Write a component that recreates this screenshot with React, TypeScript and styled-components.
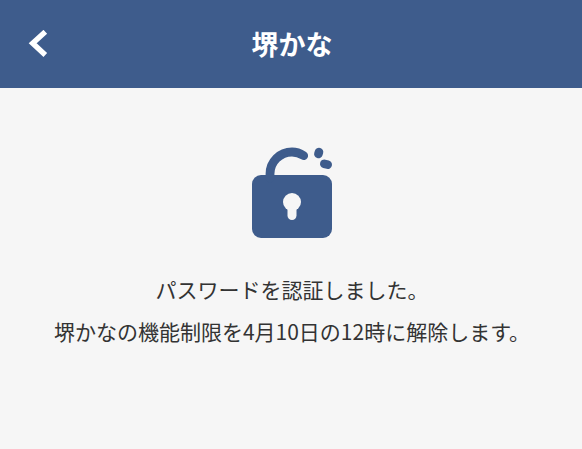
import React from "react";
import styled, { createGlobalStyle } from "styled-components";

const GlobalStyle = createGlobalStyle`
  body { margin: 0; background: #f6f6f6; }
  * { box-sizing: border-box; }
`;

const Screen = styled.div`
  height: 449px;
  display: flex;
  flex-direction: column;
  background: #f6f6f6;
  color: #333;
  font-family: "Noto Sans CJK JP", sans-serif;
`;

const Header = styled.header`
  height: 88px;
  flex: none;
  display: grid;
  grid-template-columns: 76px 1fr 76px;
  align-items: center;
  background: #3e5c8c;
  color: #fff;
`;

const BackButton = styled.button`
  display: flex;
  padding: 0 0 0 28px;
  border: 0;
  background: none;
  color: inherit;
`;

const Title = styled.h1`
  margin: 0;
  padding-left: 2px;
  text-align: center;
  font-size: 27px;
  line-height: 40px;
  font-weight: 700;
`;

const Content = styled.main`
  flex: 1;
  display: flex;
  flex-direction: column;
  align-items: center;
  padding: 56px 0 0 2px;
`;

const Message = styled.p`
  margin: 26px 0 0;
  text-align: center;
  font-size: 21px;
  line-height: 42px;
  white-space: nowrap;
`;

const BackIcon = () => (
  <svg width="20" height="28" viewBox="0 0 20 28" fill="none" stroke="currentColor" strokeWidth="5.400">
    <path d="M17.300 1.800 4.700 13.300 17.300 24.900" />
  </svg>
);

const UnlockIcon = () => (
  <svg width="88" height="98" viewBox="248 144 88 98" fill="none">
    <rect x="252" y="175" width="80" height="63" rx="9" fill="#3e5c8c" />
    <path d="M270 178v-4a22 22 0 0 1 22-22q6 0 11.700 3.600" stroke="#3e5c8c" strokeWidth="8.800" strokeLinecap="round" />
    <path d="m318.400 154 .6-2M324.300 163.800l3.400 .9" stroke="#3e5c8c" strokeWidth="8.600" strokeLinecap="round" />
    <circle cx="292" cy="202" r="9" fill="#f6f6f6" />
    <path d="M292 204v11.500" stroke="#f6f6f6" strokeWidth="9" strokeLinecap="round" />
  </svg>
);

export default function App() {
  return (
    <Screen>
      <GlobalStyle />
      <Header>
        <BackButton aria-label="戻る"><BackIcon /></BackButton>
        <Title>堺かな</Title>
      </Header>
      <Content>
        <UnlockIcon />
        <Message>
          パスワードを認証しました。
          <br />
          堺かなの機能制限を4月10日の12時に解除します。
        </Message>
      </Content>
    </Screen>
  );
}
